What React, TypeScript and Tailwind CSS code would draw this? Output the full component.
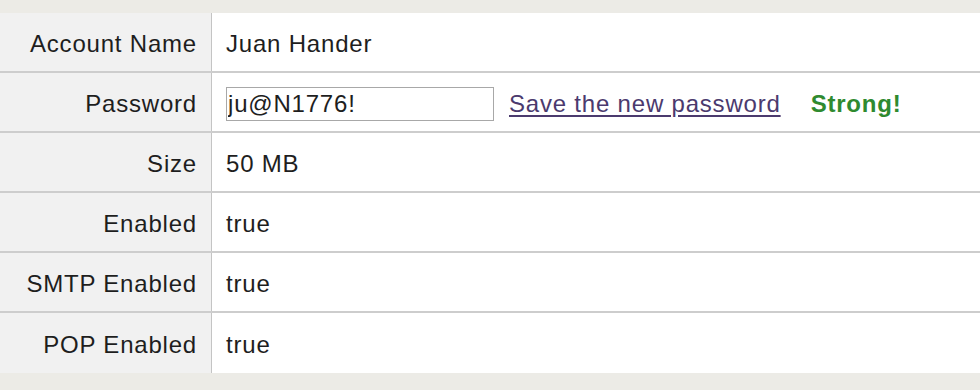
import React from 'react';

type Row = { label: string; value?: string; password?: boolean };

const rows: Row[] = [
  { label: 'Account Name', value: 'Juan Hander' },
  { label: 'Password', password: true },
  { label: 'Size', value: '50 MB' },
  { label: 'Enabled', value: 'true' },
  { label: 'SMTP Enabled', value: 'true' },
  { label: 'POP Enabled', value: 'true' },
];

const App: React.FC = () => {
  return (
    <div
      className="w-[980px] h-[390px] bg-[#ecebe6] pt-[13px] text-[24px] tracking-[0.8px] text-[#1e1e1e]"
      style={{ fontFamily: '"Liberation Sans", Arial, sans-serif' }}
    >
      <div className="flex flex-col">
        {rows.map((row, i) => (
          <div
            key={row.label}
            className={`flex h-[60px] ${i < rows.length - 1 ? 'border-b-2 border-[#cdcdcd]' : ''}`}
          >
            <div className="w-[212px] shrink-0 bg-[#f1f1f1] border-r border-[#c4c4c4] flex items-center justify-end pr-[14px] pt-[3px]">
              {row.label}
            </div>
            <div className="flex-1 bg-white flex items-center pl-[14px] pt-[3px]">
              {row.password ? (
                <div className="flex items-center">
                  <input
                    readOnly
                    defaultValue="ju@N1776!"
                    className="w-[268px] h-[34px] border border-[#a8a8a8] pl-[1px] text-[24px] tracking-[0.8px] text-[#1e1e1e] outline-none"
                    style={{ fontFamily: '"Liberation Sans", Arial, sans-serif' }}
                  />
                  <a href="#" className="ml-[15px] text-[#4b3a6e] underline underline-offset-[3px]">
                    Save the new password
                  </a>
                  <span className="ml-[30px] font-bold text-[#2f8a2f]">Strong!</span>
                </div>
              ) : (
                row.value
              )}
            </div>
          </div>
        ))}
      </div>
    </div>
  );
};

export default App;
